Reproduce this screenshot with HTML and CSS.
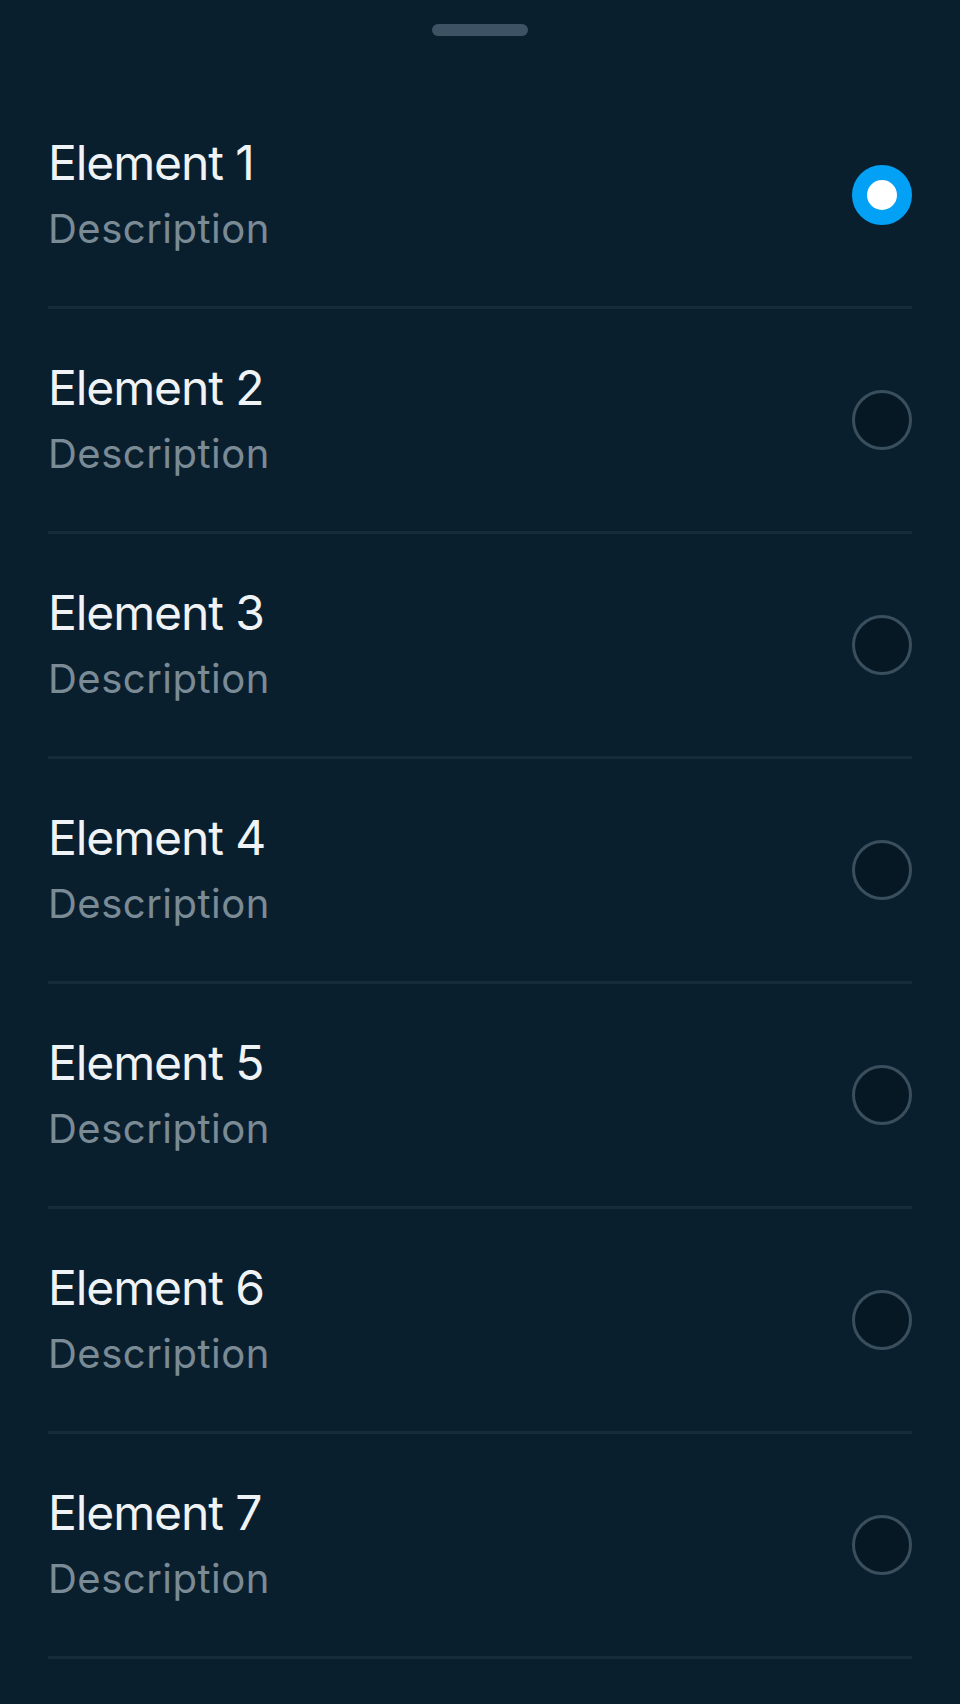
FILE: index.html
```html
<!DOCTYPE html>
<html lang="en">
<head>
<meta charset="utf-8">
<title>Select element</title>
<link rel="stylesheet" href="styles.css">
</head>
<body>
<div class="sheet">
  <div class="handle-wrap"><div class="handle"></div></div>
  <ul class="list">
    <li class="row"><div class="text"><div class="title">Element 1</div><div class="desc">Description</div></div><span class="radio selected"></span></li>
    <li class="row"><div class="text"><div class="title">Element 2</div><div class="desc">Description</div></div><span class="radio"></span></li>
    <li class="row"><div class="text"><div class="title">Element 3</div><div class="desc">Description</div></div><span class="radio"></span></li>
    <li class="row"><div class="text"><div class="title">Element 4</div><div class="desc">Description</div></div><span class="radio"></span></li>
    <li class="row"><div class="text"><div class="title">Element 5</div><div class="desc">Description</div></div><span class="radio"></span></li>
    <li class="row"><div class="text"><div class="title">Element 6</div><div class="desc">Description</div></div><span class="radio"></span></li>
    <li class="row"><div class="text"><div class="title">Element 7</div><div class="desc">Description</div></div><span class="radio"></span></li>
  </ul>
</div>
</body>
</html>
```
FILE: styles.css
```css
html, body {
  margin: 0;
  padding: 0;
  background: #0a1f2e;
}
body {
  font-family: Inter, "Noto Sans", sans-serif;
  min-height: 1704px;
}
.sheet {
  display: flex;
  flex-direction: column;
}
.handle-wrap {
  display: flex;
  justify-content: center;
  padding-top: 24px;
}
.handle {
  width: 96px;
  height: 12px;
  border-radius: 6px;
  background: #3d5363;
}
.list {
  list-style: none;
  margin: 48px 0 0;
  padding: 0 48px;
}
.row {
  height: 222px;
  display: flex;
  align-items: center;
  justify-content: space-between;
  border-bottom: 3px solid #172b39;
}
.text {
  display: flex;
  flex-direction: column;
  padding-bottom: 5px;
}
.title {
  font-size: 48px;
  line-height: 60px;
  color: #f0f3f6;
  font-weight: 400;
  letter-spacing: -1.1px;
}
.desc {
  margin-top: 12px;
  font-size: 40px;
  line-height: 48px;
  color: #7a8b96;
  letter-spacing: 0.5px;
}
.radio {
  width: 60px;
  height: 60px;
  box-sizing: border-box;
  border-radius: 50%;
  border: 3px solid #3a4f5e;
  background: #061823;
  flex: none;
}
.radio.selected {
  border: 15px solid #03a1f5;
  background: #ffffff;
}
```
